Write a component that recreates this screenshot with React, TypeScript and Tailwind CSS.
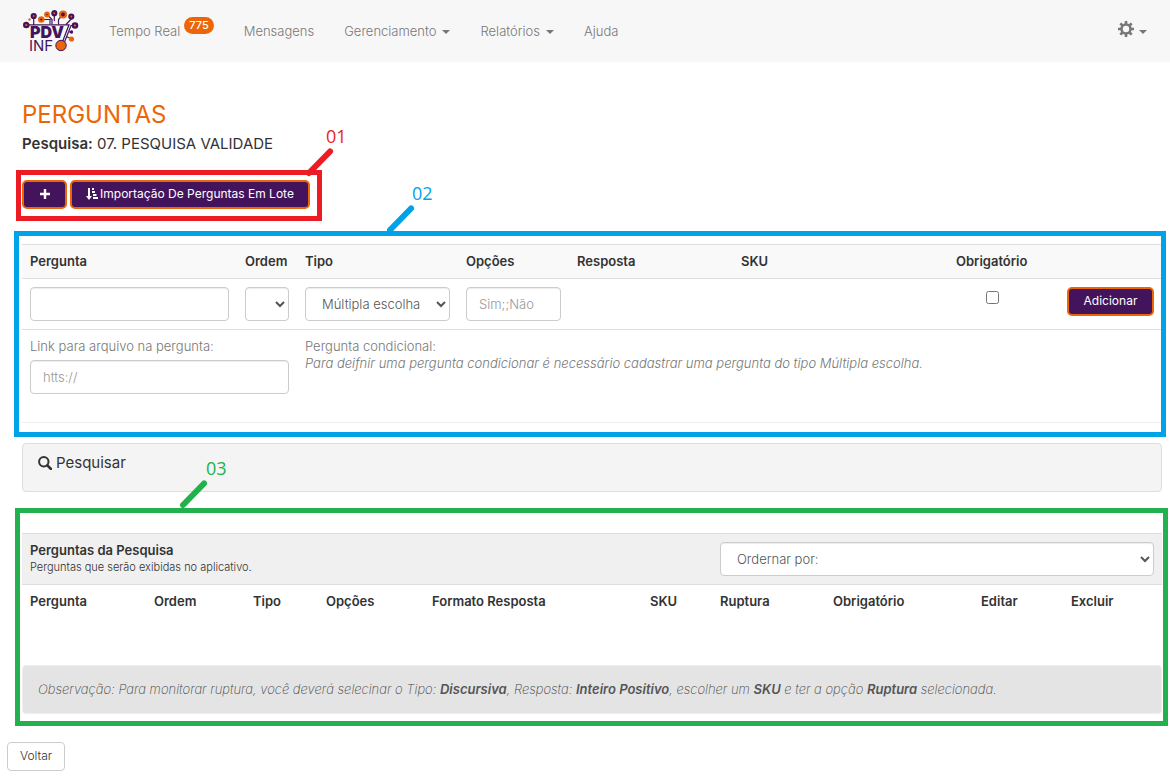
import React from "react";

const purple = "#43145b";
const orange = "#ec6608";

function Logo() {
  const nodes: [number, number, number, string, string][] = [
    [3.3, 15, 2.2, orange, purple],
    [10.7, 6, 2, orange, purple],
    [18.3, 9.5, 2.2, purple, orange],
    [24, 4.5, 1.8, purple, orange],
    [31.3, 3.2, 2, orange, purple],
    [40, 4.5, 3, purple, orange],
    [48.3, 6.5, 2, orange, purple],
    [52, 15.5, 2.2, orange, purple],
  ];
  return (
    <svg width="56" height="46" viewBox="0 0 56 46" role="img" aria-label="PDV Info">
      <g fill="none" stroke={purple} strokeWidth="1.2">
        <path d="M3 14.8H46L39 33" />
        <path d="M10.700 6V15M18.300 9.500H27V14M24 4.500L29 9.500V14.500M31.300 3.200V11M40 4.500L35.500 9.500V14.500M48.300 6.500V9L43 14.500" />
        <path d="M52 15.500H48L41.500 32M48.300 22H45.500M48.300 29L43.500 26.500" />
      </g>
      {nodes.map(([x, y, r, inner, outer]) => (
        <circle key={x} cx={x} cy={y} r={r} fill={inner} stroke={outer} strokeWidth="2.2" />
      ))}
      <circle cx="6.5" cy="9.5" r="1.2" fill={orange} />
      <circle cx="48.5" cy="22" r="1.7" fill={purple} />
      <circle cx="48.5" cy="29" r="2.6" fill={orange} />
      <text x="7" y="28" fontSize="16" fontWeight="900" fill={purple} className="font-['Inter']">
        PDV
      </text>
      <text x="6" y="41" fontSize="15" fontWeight="400" fill={purple} className="font-['Inter']">
        INF
      </text>
      <circle cx="38" cy="35.500" r="5.200" fill={orange} stroke={purple} strokeWidth="1" />
    </svg>
  );
}

function Caret() {
  return (
    <svg width="8" height="4" viewBox="0 0 8 4" className="mt-0.5 shrink-0" aria-hidden="true">
      <path d="M0 0H8L4 4Z" fill="currentColor" />
    </svg>
  );
}

function Gear() {
  return (
    <svg width="16" height="16" viewBox="0 0 16 16" className="mb-1" aria-hidden="true">
      <circle cx="8" cy="8" r="4.500" fill="none" stroke="currentColor" strokeWidth="2.600" />
      <path
        d="M8 0V3M8 13V16M0 8H3M13 8H16M2.300 2.300L4.500 4.500M11.500 11.500L13.700 13.700M2.300 13.700L4.500 11.500M11.500 4.500L13.700 2.300"
        stroke="currentColor"
        strokeWidth="2.600"
      />
    </svg>
  );
}

function SortIcon() {
  return (
    <svg width="12" height="12" viewBox="0 0 12 12" aria-hidden="true">
      <path d="M2 0H4V8H6L3 12L0 8H2Z" fill="currentColor" />
      <path d="M6 0H8V2H6ZM6 3H9V5H6ZM7 6H10.500V8H7ZM7 9H12V11H7Z" fill="currentColor" />
    </svg>
  );
}

function SearchIcon() {
  return (
    <svg width="14" height="14" viewBox="0 0 14 14" aria-hidden="true">
      <circle cx="5.800" cy="5.800" r="4.700" fill="none" stroke="currentColor" strokeWidth="2" />
      <path d="M9.300 9.300L13 13" stroke="currentColor" strokeWidth="2.600" strokeLinecap="round" />
    </svg>
  );
}

const navLink = "flex items-center gap-1.5 text-[#777]";
const field =
  "block h-[34px] w-full rounded border border-[#ccc] bg-white px-3 font-light text-[#555] shadow-[inset_0_1px_1px_rgba(0,0,0,0.075)] placeholder:text-[#999]";
const primary =
  "flex h-[29px] items-center justify-center rounded-[5px] border-2 border-[#ec6608] bg-[#43145b] pb-0.5 text-[12px] text-white";
const th = "px-2 py-2 text-left align-top leading-[17px] font-semibold";

interface CalloutProps {
  label: string;
  color: string;
  className: string;
  labelClass: string;
}

function Callout({ label, color, className, labelClass }: CalloutProps) {
  return (
    <div className={`pointer-events-none absolute ${className}`}>
      <span
        className={`block font-['Open_Sans',sans-serif] text-[18px] leading-6 ${labelClass}`}
        style={{ color }}
      >
        {label}
      </span>
      <svg width="32" height="30" viewBox="0 0 32 30" aria-hidden="true" className="block">
        <path d="M4 25L25 3.500" stroke={color} strokeWidth="6" strokeLinecap="round" />
      </svg>
    </div>
  );
}

const listColumns: [string, string][] = [
  ["Pergunta", "w-[124px]"],
  ["Ordem", "w-[99px]"],
  ["Tipo", "w-[73px]"],
  ["Opções", "w-[106px]"],
  ["Formato Resposta", ""],
  ["SKU", "w-[70px]"],
  ["Ruptura", "w-[113px]"],
  ["Obrigatório", "w-[148px]"],
  ["Editar", "w-[90px]"],
  ["Excluir", "w-[99px]"],
];

export default function App() {
  return (
    <div className="bg-white pb-1.5 font-['Inter',sans-serif] text-[13px] leading-[18px] text-[#333]">
      <header className="flex h-[62px] items-center bg-[#f7f7f7] px-[23px]">
        <a href="#inicio" aria-label="PDV Info" className="mt-1 mr-[30px]">
          <Logo />
        </a>
        <nav className="flex items-center gap-[30px] font-light">
          <a href="#tempo-real" className="flex items-center gap-1 text-[#777]">
            Tempo Real
            <span className="mb-3 rounded-full bg-[#ec6608] px-[5px] text-[11px] leading-[17px] font-medium text-white">
              775
            </span>
          </a>
          <a href="#mensagens" className={navLink}>Mensagens</a>
          <a href="#gerenciamento" className={navLink}>Gerenciamento <Caret /></a>
          <a href="#relatorios" className={navLink}>Relatórios <Caret /></a>
          <a href="#ajuda" className={navLink}>Ajuda</a>
        </nav>
        <button type="button" aria-label="Configurações" className="ml-auto flex items-center gap-[5px] text-[#777]">
          <Gear />
          <Caret />
        </button>
      </header>

      <main className="pt-[41px] pr-2 pl-[22px]">
        <h1 className="text-[24px] leading-6 text-[#ec6608]">PERGUNTAS</h1>
        <p className="mt-[7px] text-[15px] leading-5">
          <b className="font-semibold">Pesquisa:</b> 07. PESQUISA VALIDADE
        </p>

        <div className="relative mt-[26px] flex w-fit gap-[3px]">
          <button type="button" aria-label="Adicionar pergunta" className={`${primary} w-[45px]`}>
            <svg width="10" height="10" viewBox="0 0 10 10" aria-hidden="true">
              <path d="M5 0V10M0 5H10" stroke="currentColor" strokeWidth="2.400" />
            </svg>
          </button>
          <button type="button" className={`${primary} w-[240px] gap-0.5`}>
            <SortIcon />
            Importação De Perguntas Em Lote
          </button>
          <div className="pointer-events-none absolute -top-2.5 -right-3 -bottom-3 -left-1.5 border-5 border-[#ed1c24]" />
          <Callout label="01" color="#ed1c24" className="-top-14 left-[283px]" labelClass="pl-[21px]" />
        </div>

        <section className="relative mt-[35px] border-b border-[#eee] pb-5">
          <table className="w-full table-fixed border-collapse">
            <thead>
              <tr className="border-y border-[#ddd] bg-[#f9f9f9]">
                <th className={`${th} w-[215px]`}>Pergunta</th>
                <th className={`${th} w-[60px]`}>Ordem</th>
                <th className={`${th} w-[161px]`}>Tipo</th>
                <th className={`${th} w-[111px]`}>Opções</th>
                <th className={`${th} w-[164px]`}>Resposta</th>
                <th className={th}>SKU</th>
                <th className={`${th} w-[88px]`}>Obrigatório</th>
                <th className="w-[126px]" />
              </tr>
            </thead>
            <tbody>
              <tr className="border-b border-[#ddd] align-top">
                <td className="p-2"><input aria-label="Pergunta" className={field} /></td>
                <td className="p-2">
                  <select aria-label="Ordem" className={field}><option></option></select>
                </td>
                <td className="p-2">
                  <select aria-label="Tipo" className={field}><option>Múltipla escolha</option></select>
                </td>
                <td className="p-2"><input aria-label="Opções" placeholder="Sim;;Não" className={field} /></td>
                <td />
                <td />
                <td className="pt-3 text-center">
                  <input type="checkbox" aria-label="Obrigatório" className="mx-auto block size-[13px]" />
                </td>
                <td className="p-2">
                  <button type="button" className={`${primary} ml-auto w-[87px]`}>Adicionar</button>
                </td>
              </tr>
              <tr className="align-top leading-[17px] font-light text-[#777]">
                <td colSpan={2} className="p-2">
                  <label htmlFor="link" className="mb-[5px] block">Link para arquivo na pergunta:</label>
                  <input id="link" placeholder="htts://" className={field} />
                </td>
                <td colSpan={6} className="p-2">
                  Pergunta condicional:
                  <br />
                  <i>Para deifnir uma pergunta condicionar é necessário cadastrar uma pergunta do tipo Múltipla escolha.</i>
                </td>
              </tr>
            </tbody>
          </table>
          <div className="pointer-events-none absolute -top-[13px] -right-1 -bottom-[15px] -left-2 border-5 border-[#00a2e8]" />
          <Callout label="02" color="#00a2e8" className="-top-[63px] left-[364px]" labelClass="pl-[26px]" />
        </section>

        <section className="mt-5 rounded border border-[#ddd] bg-[#f4f4f4] px-[15px] pt-[9px] pb-[18px]">
          <button type="button" className="flex items-center gap-1 text-[15px] leading-5">
            <SearchIcon />
            Pesquisar
          </button>
        </section>

        <section className="relative mt-[41px]">
          <div className="flex items-start justify-between border-y border-[#ddd] bg-[#f0f0f0] p-2">
            <div>
              <h2 className="leading-[17px] font-semibold">Perguntas da Pesquisa</h2>
              <p className="text-[11px] leading-[17px] font-light">Perguntas que serão exibidas no aplicativo.</p>
            </div>
            <select aria-label="Ordenar" className={`${field} max-w-[434px]`}>
              <option>Ordernar por:</option>
            </select>
          </div>
          <table className="w-full table-fixed">
            <thead>
              <tr>
                {listColumns.map(([name, width]) => (
                  <th key={name} className={`${th} ${width}`}>{name}</th>
                ))}
              </tr>
            </thead>
          </table>
          <p className="mt-[47px] rounded border border-[#eee] bg-[#e4e4e4] px-[15px] pt-[14px] pb-[15px] font-extralight text-[#444] italic">
            Observação: Para monitorar ruptura, você deverá selecinar o Tipo: <b className="font-semibold text-[#555]">Discursiva</b>, Resposta:{" "}
            <b className="font-semibold text-[#555]">Inteiro Positivo</b>, escolher um <b className="font-semibold text-[#555]">SKU</b> e ter a opção{" "}
            <b className="font-semibold text-[#555]">Ruptura</b> selecionada.
          </p>
          <div className="pointer-events-none absolute -top-[25px] -right-1.5 -bottom-3 -left-[7px] border-5 border-[#22b14c]" />
          <Callout label="03" color="#22b14c" className="-top-[77px] left-[157px]" labelClass="pl-[27px]" />
        </section>
      </main>

      <button
        type="button"
        className="mt-7 ml-[7px] block h-[29px] w-[58px] rounded border border-[#ccc] bg-white pb-0.5 text-[12px] font-light text-[#333]"
      >
        Voltar
      </button>
    </div>
  );
}
